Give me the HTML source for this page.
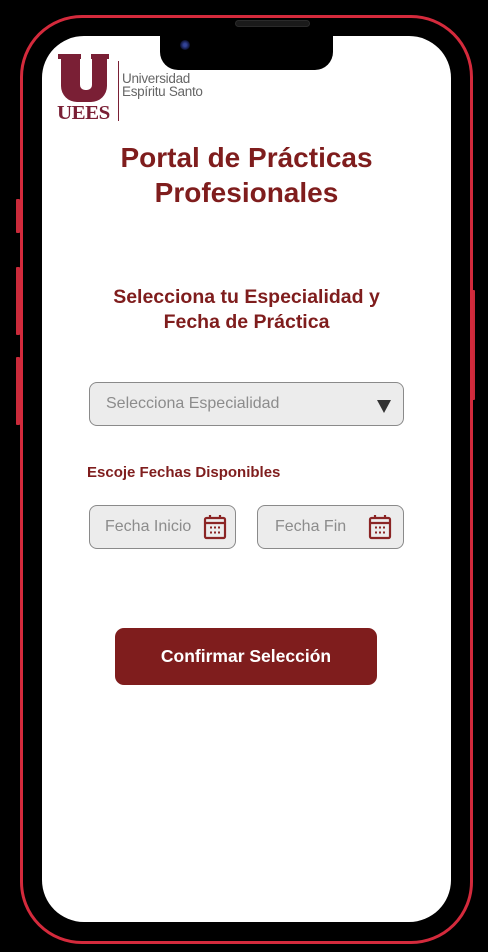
<!DOCTYPE html>
<html><head><meta charset="utf-8"><style>
*{margin:0;padding:0;box-sizing:border-box}
body{width:488px;height:952px;background:#000;position:relative;overflow:hidden;font-family:"Liberation Sans",Arial,sans-serif}
.frame{position:absolute;left:20px;top:15px;width:453px;height:929px;border:3px solid #d42a3c;border-radius:62px}
.btn{position:absolute;background:#c92a3a;border-radius:1px}
.screen{position:absolute;left:42px;top:36px;width:409px;height:886px;background:#fff;border-radius:42px;overflow:hidden}
.notch{position:absolute;left:118px;top:-2px;width:173px;height:36px;background:#000;border-radius:0 0 18px 18px}
.spk{position:absolute;left:235px;top:20px;width:75px;height:7px;border-radius:4px;background:#1a1a1a;border:1px solid #2a2a2a}
.cam{position:absolute;left:180px;top:40px;width:10px;height:10px;border-radius:50%;background:radial-gradient(circle,#33449a 20%,#0a0d2a 70%)}
.red{color:#7f1d1d;font-weight:bold;text-align:center;position:absolute;left:0;width:409px}
.field{position:absolute;background:#ececec;border:1px solid #8a8a8a;border-radius:8px;color:#8c8c8c;font-size:16px}
</style></head><body>
<div class="btn" style="left:16px;top:199px;width:4px;height:34px"></div>
<div class="btn" style="left:16px;top:267px;width:4px;height:68px"></div>
<div class="btn" style="left:16px;top:357px;width:4px;height:68px"></div>
<div class="btn" style="left:472px;top:290px;width:3px;height:110px"></div>
<div class="frame"></div>
<div class="screen">
  <div class="notch"></div>
  <!-- logo -->
  <div style="position:absolute;left:19px;top:18px;width:46px;height:48px;background:#7a1f35;border-radius:0 0 16px 16px"></div>
  <div style="position:absolute;left:38px;top:18px;width:12px;height:36px;background:#fff;border-radius:0 0 5px 5px"></div>
  <div style="position:absolute;left:16px;top:18px;width:23px;height:5px;background:#7a1f35"></div>
  <div style="position:absolute;left:49px;top:18px;width:18px;height:5px;background:#7a1f35"></div>
  <div style="position:absolute;left:15px;top:66px;font-family:'Liberation Serif',serif;font-weight:bold;font-size:20px;color:#7a1f35;letter-spacing:-0.5px;transform:scaleX(1.05);transform-origin:left">UEES</div>
  <div style="position:absolute;left:76px;top:25px;width:1px;height:60px;background:#7a1f35"></div>
  <div style="position:absolute;left:80px;top:36px;font-size:13.5px;color:#666;line-height:13px;letter-spacing:-0.3px">Universidad<br>Espíritu Santo</div>
  <div class="red" style="top:104px;font-size:28px;line-height:35px">Portal de Prácticas<br>Profesionales</div>
  <div class="red" style="top:249px;font-size:19.5px;line-height:25px">Selecciona tu Especialidad y<br>Fecha de Práctica</div>
  <div class="field" style="left:47px;top:346px;width:315px;height:44px;padding:12px 0 0 16px">Selecciona Especialidad
    <span style="position:absolute;right:12px;top:17px;width:0;height:0;border-left:7px solid transparent;border-right:7px solid transparent;border-top:13px solid #333"></span></div>
  <div style="position:absolute;left:45px;top:428px;font-size:15px;font-weight:bold;color:#7f1d1d">Escoje Fechas Disponibles</div>
  <div class="field" style="left:47px;top:469px;width:147px;height:44px;padding:12px 0 0 15px">Fecha Inicio</div>
  <div class="field" style="left:215px;top:469px;width:147px;height:44px;padding:12px 0 0 17px">Fecha Fin</div>
  <svg style="position:absolute;left:161px;top:478px" width="24" height="26" viewBox="0 0 24 26"><g fill="none" stroke="#8b2525" stroke-width="2.2"><rect x="2" y="4" width="20" height="20" rx="1.5"/><line x1="2" y1="9" x2="22" y2="9"/><line x1="7" y1="1" x2="7" y2="5"/><line x1="17" y1="1" x2="17" y2="5"/></g><g fill="#8b2525"><rect x="7" y="12.5" width="2" height="2"/><rect x="11" y="12.5" width="2" height="2"/><rect x="15" y="12.5" width="2" height="2"/><rect x="7" y="17.5" width="2" height="2"/><rect x="11" y="17.5" width="2" height="2"/><rect x="15" y="17.5" width="2" height="2"/></g></svg>
  <svg style="position:absolute;left:326px;top:478px" width="24" height="26" viewBox="0 0 24 26"><g fill="none" stroke="#8b2525" stroke-width="2.2"><rect x="2" y="4" width="20" height="20" rx="1.5"/><line x1="2" y1="9" x2="22" y2="9"/><line x1="7" y1="1" x2="7" y2="5"/><line x1="17" y1="1" x2="17" y2="5"/></g><g fill="#8b2525"><rect x="7" y="12.5" width="2" height="2"/><rect x="11" y="12.5" width="2" height="2"/><rect x="15" y="12.5" width="2" height="2"/><rect x="7" y="17.5" width="2" height="2"/><rect x="11" y="17.5" width="2" height="2"/><rect x="15" y="17.5" width="2" height="2"/></g></svg>
  <div style="position:absolute;left:73px;top:592px;width:262px;height:57px;background:#7f1d1d;border-radius:9px;color:#fff;font-weight:bold;font-size:17.5px;text-align:center;line-height:57px">Confirmar Selección</div>
</div>
<div class="spk"></div>
<div class="cam"></div>
</body></html>
